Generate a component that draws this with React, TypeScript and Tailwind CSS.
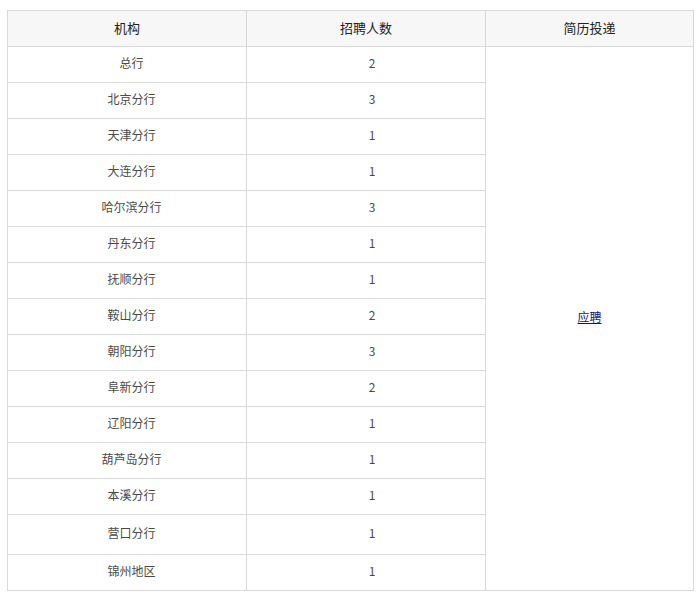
import React from "react";

const rows: [string, string, boolean?][] = [
  ["总行", "2"],
  ["北京分行", "3"],
  ["天津分行", "1"],
  ["大连分行", "1"],
  ["哈尔滨分行", "3"],
  ["丹东分行", "1"],
  ["抚顺分行", "1"],
  ["鞍山分行", "2"],
  ["朝阳分行", "3"],
  ["阜新分行", "2"],
  ["辽阳分行", "1"],
  ["葫芦岛分行", "1"],
  ["本溪分行", "1"],
  ["营口分行", "1", true],
  ["锦州地区", "1"],
];

export default function App() {
  return (
    <div
      className="w-[700px] h-[596px] bg-white pt-[10px] pl-[7px]"
      style={{ fontFamily: '"Noto Sans CJK SC", "Noto Sans", sans-serif' }}
    >
      <table className="border-collapse table-fixed w-[686px] text-[#333]">
        <colgroup>
          <col className="w-[239px]" />
          <col className="w-[239px]" />
          <col className="w-[208px]" />
        </colgroup>
        <thead>
          <tr className="h-[36px] bg-[#f7f7f7]">
            <th className="border border-[#d8d8d8] text-[13px] font-normal text-center text-[#222] pb-[1px]">机构</th>
            <th className="border border-[#d8d8d8] text-[13px] font-normal text-center text-[#222] pb-[1px]">招聘人数</th>
            <th className="border border-[#d8d8d8] text-[13px] font-normal text-center text-[#222] pb-[1px]">简历投递</th>
          </tr>
        </thead>
        <tbody>
          {rows.map(([name, n, tall], i) => (
            <tr key={name} className={tall ? "h-[40px]" : "h-[36px]"}>
              <td className="border border-[#d8d8d8] text-[12px] text-center text-[#4a4a4a] pl-[9px] pb-[3px]">{name}</td>
              <td className="border border-[#d8d8d8] text-[12px] text-center text-[#4a4a4a] pl-[12px] pb-[3px]">{n}</td>
              {i === 0 && (
                <td rowSpan={rows.length} className="border border-[#d8d8d8] text-[12px] text-center align-middle pb-[4px]">
                  <a href="#" className="text-[#14147a] underline">应聘</a>
                </td>
              )}
            </tr>
          ))}
        </tbody>
      </table>
    </div>
  );
}
